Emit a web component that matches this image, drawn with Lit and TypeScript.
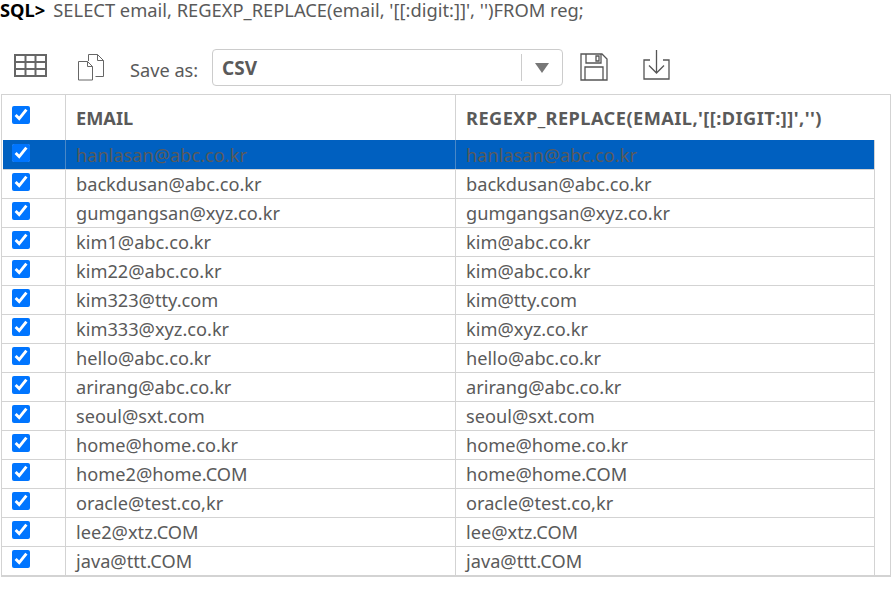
import { LitElement, html, css } from "lit";
import { customElement } from "lit/decorators.js";

const rows: [string, string][] = [
  ["hanlasan@abc.co.kr", "hanlasan@abc.co.kr"],
  ["backdusan@abc.co.kr", "backdusan@abc.co.kr"],
  ["gumgangsan@xyz.co.kr", "gumgangsan@xyz.co.kr"],
  ["kim1@abc.co.kr", "kim@abc.co.kr"],
  ["kim22@abc.co.kr", "kim@abc.co.kr"],
  ["kim323@tty.com", "kim@tty.com"],
  ["kim333@xyz.co.kr", "kim@xyz.co.kr"],
  ["hello@abc.co.kr", "hello@abc.co.kr"],
  ["arirang@abc.co.kr", "arirang@abc.co.kr"],
  ["seoul@sxt.com", "seoul@sxt.com"],
  ["home@home.co.kr", "home@home.co.kr"],
  ["home2@home.COM", "home@home.COM"],
  ["oracle@test.co,kr", "oracle@test.co,kr"],
  ["lee2@xtz.COM", "lee@xtz.COM"],
  ["java@ttt.COM", "java@ttt.COM"],
];

@customElement("app-root")
export class AppRoot extends LitElement {
  static styles = css`
    :host { display: block; width: 894px; height: 593px; overflow: hidden; background: #fff; color: #5a5a5a; font-family: "Noto Sans", "Open Sans", sans-serif; font-size: 18.200px; }
    .sql { height: 22px; line-height: 20px; white-space: nowrap; font-size: 18.320px; }
    .sql b { color: #000; font-weight: 700; margin-right: 8px; }
    .toolbar { height: 72px; display: flex; align-items: flex-start; box-sizing: border-box; padding: 27px 0 0 14px; }
    .toolbar svg { display: block; flex: none; }
    .ic1 { margin-top: 5px; }
    .ic2 { margin-left: 30px; margin-top: 4px; }
    .lbl { margin-left: 25px; margin-right: 14px; line-height: 42px; width: 68px; white-space: nowrap; }
    .sel { width: 351px; height: 37px; box-sizing: border-box; border: 1px solid #ccc; border-radius: 4px; display: flex; align-items: center; font-weight: 700; font-size: 19px; padding-left: 9px; }
    .sel span { flex: 1; }
    .arrow { width: 40px; height: 27px; border-left: 1px solid #ccc; display: flex; align-items: center; justify-content: center; }
    .tri { width: 0; height: 0; border-left: 7px solid transparent; border-right: 7px solid transparent; border-top: 10px solid #777; }
    .ic3 { margin-left: 17px; margin-top: 4px; }
    .ic4 { margin-left: 35px; margin-top: 1px; }
    .grid { width: 890px; height: 483px; margin-left: 1px; box-sizing: border-box; border: 1px solid #d3d3d3; border-bottom-width: 2px; }
    .row { display: grid; grid-template-columns: 63px 390px 420px; width: 873px; height: 29px; box-sizing: border-box; border-bottom: 1px solid #d3d3d3; border-right: 1px solid #d3d3d3; }
    .row:last-child { border-bottom: none; }
    .head { height: 45px; border-bottom: none; border-right: none; font-weight: 700; width: 888px; grid-template-columns: 63px 390px 435px; }
    .cell { border-left: 1px solid #d3d3d3; padding-left: 10px; line-height: 29px; white-space: nowrap; overflow: hidden; }
    .cell:first-child { border-left: none; padding-left: 10px; }
    .head .cell { line-height: 46px; }
    .wide { letter-spacing: 0.450px; }
    .sel-row { background: #0060c0; margin-left: 1px; width: 872px; height: 30px; grid-template-columns: 62px 390px 420px; }
    .sel-row .cell { line-height: 31px; border-left-color: rgba(211, 211, 211, 0.35); }
    .sel-row .cell:first-child { padding-left: 9px; }
    .sel-row input { margin-top: 4px; }
    input { width: 18px; height: 18px; margin: 3px 0 0; display: block; }
    .head input { margin-top: 11px; }
  `;

  render() {
    return html`
      <div class="sql"><b>SQL&gt;</b>SELECT email, REGEXP_REPLACE(email, '[[:digit:]]', '')FROM reg;</div>
      <div class="toolbar">
        <svg class="ic1" width="33" height="23" viewBox="0 0 33 23" fill="none" stroke="#666" stroke-width="2"><rect x="1" y="1" width="31" height="21"/><path d="M1 8h31M1 15h31M11.500 1v21M21.500 1v21"/></svg>
        <svg class="ic2" width="28" height="28" viewBox="0 0 28 28" fill="none" stroke="#666" stroke-width="1"><path d="M1.500 8.500h9l5 5v13.500h-14zM10.500 8.500v5h5"/><path d="M11.500 8V1.500h9l6 6v16h-8M20.500 1.500v6h6"/></svg>
        <span class="lbl">Save as:</span>
        <div class="sel"><span>CSV</span><div class="arrow"><div class="tri"></div></div></div>
        <svg class="ic3" width="28" height="28" viewBox="0 0 28 28" fill="none" stroke="#555" stroke-width="1.300"><path d="M1 1h21l5 5v21H1z"/><path d="M6 1v9h15V1M16 3h3v5h-3z"/><path d="M5 27V14h18v13"/></svg>
        <svg class="ic4" width="28" height="30" viewBox="0 0 28 30" fill="none" stroke="#555" stroke-width="1.300"><path d="M7 10H1v19h25V10h-6"/><path d="M13.500 0v23M6 15.500l7.500 7.500 7.500-7.500"/></svg>
      </div>
      <div class="grid">
        <div class="row head">
          <div class="cell"><input type="checkbox" .checked=${true} /></div>
          <div class="cell">EMAIL</div>
          <div class="cell wide">REGEXP_REPLACE(EMAIL,'[[:DIGIT:]]','')</div>
        </div>
        ${rows.map(
          (r, i) => html`<div class="row ${i === 0 ? "sel-row" : ""}">
            <div class="cell"><input type="checkbox" .checked=${true} /></div>
            <div class="cell">${r[0]}</div>
            <div class="cell">${r[1]}</div>
          </div>`
        )}
      </div>
    `;
  }
}
